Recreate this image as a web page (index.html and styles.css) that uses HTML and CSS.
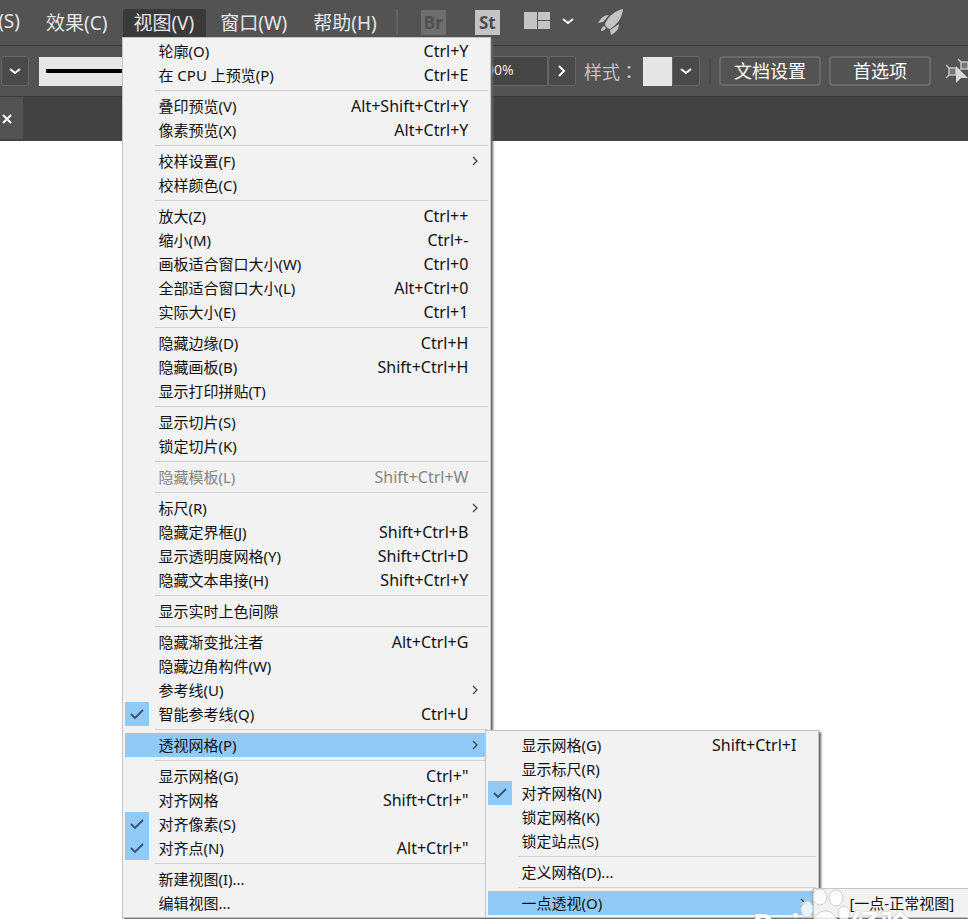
FILE: index.html
```html
<!DOCTYPE html>
<html lang="zh-CN">
<head>
    <meta charset="UTF-8">
    <meta name="viewport" content="width=device-width, initial-scale=1.0">
    <title>视图</title>
    <link rel="stylesheet" href="styles.css">
</head>
<body>
    <svg class="symbols" aria-hidden="true">
        <symbol id="check" viewBox="0 0 24 24">
            <path d="M6 12l4 4 8-8" fill="none" stroke="#35536e" stroke-width="1.8"/>
        </symbol>
        <symbol id="arrow" viewBox="0 0 8 12">
            <path d="M2 2l4 4-4 4" fill="none" stroke="#444" stroke-width="1.3"/>
        </symbol>
        <symbol id="down" viewBox="0 0 14 10">
            <path d="M2 3l5 4 5-4" fill="none" stroke="#fff" stroke-width="2"/>
        </symbol>
    </svg>

    <nav class="menubar">
        <button class="menu-title first">(S)</button>
        <button class="menu-title">效果(C)</button>
        <div class="menu-holder">
            <button class="menu-title active">视图(V)</button>
            <ul class="menu main-menu">
                <li><button>轮廓(O)<kbd>Ctrl+Y</kbd></button></li>
                <li><button>在 CPU 上预览(P)<kbd>Ctrl+E</kbd></button></li>
                <li class="line"></li>
                <li><button>叠印预览(V)<kbd>Alt+Shift+Ctrl+Y</kbd></button></li>
                <li><button>像素预览(X)<kbd>Alt+Ctrl+Y</kbd></button></li>
                <li class="line"></li>
                <li><button>校样设置(F)<svg class="arrow"><use href="#arrow"/></svg></button></li>
                <li><button>校样颜色(C)</button></li>
                <li class="line"></li>
                <li><button>放大(Z)<kbd>Ctrl++</kbd></button></li>
                <li><button>缩小(M)<kbd>Ctrl+-</kbd></button></li>
                <li><button>画板适合窗口大小(W)<kbd>Ctrl+0</kbd></button></li>
                <li><button>全部适合窗口大小(L)<kbd>Alt+Ctrl+0</kbd></button></li>
                <li><button>实际大小(E)<kbd>Ctrl+1</kbd></button></li>
                <li class="line"></li>
                <li><button>隐藏边缘(D)<kbd>Ctrl+H</kbd></button></li>
                <li><button>隐藏画板(B)<kbd>Shift+Ctrl+H</kbd></button></li>
                <li><button>显示打印拼贴(T)</button></li>
                <li class="line"></li>
                <li><button>显示切片(S)</button></li>
                <li><button>锁定切片(K)</button></li>
                <li class="line"></li>
                <li><button disabled>隐藏模板(L)<kbd>Shift+Ctrl+W</kbd></button></li>
                <li class="line"></li>
                <li><button>标尺(R)<svg class="arrow"><use href="#arrow"/></svg></button></li>
                <li><button>隐藏定界框(J)<kbd>Shift+Ctrl+B</kbd></button></li>
                <li><button>显示透明度网格(Y)<kbd>Shift+Ctrl+D</kbd></button></li>
                <li><button>隐藏文本串接(H)<kbd>Shift+Ctrl+Y</kbd></button></li>
                <li class="line"></li>
                <li><button>显示实时上色间隙</button></li>
                <li class="line"></li>
                <li><button>隐藏渐变批注者<kbd>Alt+Ctrl+G</kbd></button></li>
                <li><button>隐藏边角构件(W)</button></li>
                <li><button>参考线(U)<svg class="arrow"><use href="#arrow"/></svg></button></li>
                <li><button><svg class="check"><use href="#check"/></svg>智能参考线(Q)<kbd>Ctrl+U</kbd></button></li>
                <li class="line"></li>
                <li class="selected">
                    <button>透视网格(P)<svg class="arrow"><use href="#arrow"/></svg></button>
                    <ul class="menu sub-menu">
                        <li><button>显示网格(G)<kbd>Shift+Ctrl+I</kbd></button></li>
                        <li><button>显示标尺(R)</button></li>
                        <li><button><svg class="check"><use href="#check"/></svg>对齐网格(N)</button></li>
                        <li><button>锁定网格(K)</button></li>
                        <li><button>锁定站点(S)</button></li>
                        <li class="line"></li>
                        <li><button>定义网格(D)...</button></li>
                        <li class="line"></li>
                        <li class="selected">
                            <button>一点透视(O)<svg class="arrow"><use href="#arrow"/></svg></button>
                            <ul class="menu point-menu">
                                <li><button>[一点-正常视图]</button></li>
                            </ul>
                        </li>
                    </ul>
                </li>
                <li class="line"></li>
                <li><button>显示网格(G)<kbd>Ctrl+"</kbd></button></li>
                <li><button>对齐网格<kbd>Shift+Ctrl+"</kbd></button></li>
                <li><button><svg class="check"><use href="#check"/></svg>对齐像素(S)</button></li>
                <li><button><svg class="check"><use href="#check"/></svg>对齐点(N)<kbd>Alt+Ctrl+"</kbd></button></li>
                <li class="line"></li>
                <li><button>新建视图(I)...</button></li>
                <li><button>编辑视图...</button></li>
            </ul>
        </div>
        <button class="menu-title">窗口(W)</button>
        <button class="menu-title">帮助(H)</button>
        <span class="divider"></span>
        <button class="app bridge">Br</button>
        <button class="app stock">St</button>
        <button class="icon-btn layout" aria-label="排列文档">
            <svg width="52" height="20" viewBox="0 0 52 20">
                <path d="M0 1h13v17H0zM14 1h12v8H14zM14 10h12v8H14z" fill="#c4c4c4"/>
                <path d="M39 8l5 4 5-4" fill="none" stroke="#fff" stroke-width="2"/>
            </svg>
        </button>
        <button class="icon-btn" aria-label="GPU 性能">
            <svg width="26" height="27" viewBox="0 0 26 27">
                <path d="M25 0C17 2 11 6 7 15c0 2 3 5 5 5C20 15 24 9 25 0zM11 6C6 6 3 9 0 14l5-1zM21 15c0 4-2 8-8 11l-1-5zM6 17c-2 1-3 3-3 5 2 0 4-1 5-3z" fill="#c4c4c4"/>
            </svg>
        </button>
    </nav>

    <div class="controls">
        <button class="drop variable" aria-label="宽度配置"><svg class="down"><use href="#down"/></svg></button>
        <button class="brush" aria-label="画笔定义"><span></span></button>
        <input class="opacity" type="text" value="100%" aria-label="不透明度">
        <button class="drop more" aria-label="更多">
            <svg width="10" height="14" viewBox="0 0 10 14"><path d="M2 2l5 5-5 5" fill="none" stroke="#fff" stroke-width="2"/></svg>
        </button>
        <span class="style-label" lang="zh-TW">样式：</span>
        <button class="swatch" aria-label="图形样式"></button>
        <button class="drop style-drop" aria-label="样式列表"><svg class="down"><use href="#down"/></svg></button>
        <span class="divider dark"></span>
        <button class="setting">文档设置</button>
        <button class="setting">首选项</button>
        <button class="icon-btn pick" aria-label="选择类似对象">
            <svg width="22" height="28" viewBox="0 0 22 28">
                <path d="M3 11h7v7H3zM15 5h7v7h-7z" fill="#777" stroke="#c4c4c4" stroke-width="1.5"/>
                <path d="M0 8l3 3M0 21l3-3M12 2l3 3M12 14l3-2" stroke="#c4c4c4" stroke-width="1.5"/>
                <path d="M10 9v17l5-5h7z" fill="#d8d8d8"/>
            </svg>
        </button>
    </div>

    <div class="tabs">
        <div class="tab">
            <button aria-label="关闭">
                <svg width="10" height="10" viewBox="0 0 10 10"><path d="M1 1l8 8M9 1l-8 8" stroke="#fff" stroke-width="2"/></svg>
            </button>
        </div>
    </div>

    <div class="watermark">
        <span>Bai</span>
        <svg width="50" height="32" viewBox="0 0 50 32">
            <g fill="#fff" fill-opacity="0.8" stroke="#d0d0d0">
                <ellipse cx="20" cy="10" rx="7" ry="8"/>
                <ellipse cx="36" cy="11" rx="7" ry="8"/>
                <ellipse cx="7" cy="22" rx="6" ry="8"/>
                <ellipse cx="44" cy="26" rx="6" ry="7"/>
                <path d="M12 36c2-5 5-11 12-12 8-1 12 6 14 12z"/>
            </g>
        </svg>
        <span>经验</span>
    </div>
</body>
</html>
```
FILE: styles.css
```css
* {
    box-sizing: border-box;
}

body {
    margin: 0;
    height: 100vh;
    overflow: hidden;
    position: relative;
    background-color: #fff;
    font-family: "Noto Sans", "Noto Sans CJK SC", sans-serif;
    font-size: 15px;
}

button {
    padding: 0;
    border: none;
    background: none;
    color: inherit;
    font: inherit;
}

.symbols {
    display: none;
}

.menubar {
    display: flex;
    align-items: flex-start;
    gap: 4px;
    height: 46px;
    padding-top: 9px;
    background-color: #535353;
    border-bottom: 1px solid #3c3c3c;
}

.menu-title {
    display: block;
    height: 28px;
    padding: 0 12px 0 10px;
    color: #e6e6e6;
    font-size: 19px;
    line-height: 24px;
    white-space: nowrap;
}

.menu-title.first {
    display: flex;
    justify-content: flex-end;
    width: 32px;
    padding-left: 0;
}

.menu-title.active {
    background-color: #3a3a3a;
    border-radius: 3px 3px 0 0;
}

.menu-holder {
    position: relative;
}

/* drop-down menus */
.menu {
    position: absolute;
    z-index: 2;
    margin: 0;
    padding: 1px 2px 2px;
    list-style: none;
    background-color: #f2f2f2;
    border: 1px solid #c4c4c4;
    box-shadow: 2px 2px 2px #666;
    color: #111;
}

.main-menu {
    top: 100%;
    left: -1px;
    width: 369px;
}

.sub-menu {
    top: -3px;
    left: 360px;
    width: 334px;
    padding-top: 2px;
}

.point-menu {
    top: -3px;
    left: 325px;
    width: 155px;
    padding: 2px 0 2px 2px;
    border-right: none;
    box-shadow: 0 2px 2px #666;
}

.menu li {
    position: relative;
}

.menu li button {
    display: flex;
    align-items: center;
    width: 100%;
    height: 24px;
    padding: 0 20px 0 33px;
    line-height: 24px;
    text-align: left;
    white-space: nowrap;
}

.menu .point-menu button {
    padding-right: 0;
}

.menu li button:disabled {
    color: #858585;
}

.menu .selected > button {
    background-color: #91c9f7;
}

.menu .line {
    height: 7px;
    padding: 3px 0 3px 30px;
}

.menu .line::before {
    content: "";
    display: block;
    height: 1px;
    background-color: #d0d0d0;
}

.menu kbd {
    margin-left: auto;
    font: inherit;
    font-size: 16px;
}

.check {
    width: 24px;
    height: 24px;
    margin: 0 9px 0 -33px;
    background-color: #91c9f7;
}

.arrow {
    width: 8px;
    height: 12px;
    margin: 0 -11px 0 auto;
}

.divider {
    width: 2px;
    height: 26px;
    background-color: #616161;
}

.menubar .divider {
    margin: 0 19px 0 3px;
}

.app {
    width: 25px;
    height: 25px;
    margin: 1px 25px 0 0;
    font-size: 17px;
    font-weight: bold;
    line-height: 25px;
}

.bridge {
    background-color: #6e6e6e;
    color: #505050;
}

.stock {
    margin-right: 20px;
    background-color: #c4c4c4;
    color: #4c4c4c;
}

.icon-btn svg {
    display: block;
}

.layout {
    margin: 2px 18px 0 0;
}

/* control bar */
.controls {
    display: flex;
    align-items: center;
    height: 51px;
    background-color: #535353;
    border-bottom: 1px solid #3c3c3c;
}

.drop {
    display: flex;
    align-items: center;
    justify-content: center;
    width: 28px;
    height: 30px;
    background-color: #4a4a4a;
    border: 1px solid #666;
    border-radius: 3px;
}

.down {
    width: 14px;
    height: 10px;
}

.variable {
    margin: 0 10px 0 1px;
}

.brush {
    flex: 1;
    height: 29px;
    padding: 0 0 0 7px;
    background-color: #e6e6e6;
}

.brush span {
    display: block;
    height: 4px;
    background-color: #000;
}

.opacity {
    width: 77px;
    height: 30px;
    margin-left: 20px;
    padding: 0 0 4px 6px;
    background-color: #454545;
    border: 1px solid #666;
    color: #e6e6e6;
    font: inherit;
    font-size: 14px;
}

.style-label {
    margin-left: 8px;
    color: #c4c4c4;
    font-family: "Noto Sans CJK TC", sans-serif;
    font-size: 18px;
    white-space: nowrap;
}

.swatch {
    width: 29px;
    height: 29px;
    margin-left: 5px;
    background-color: #e6e6e6;
}

.dark {
    margin: 0 8px 0 9px;
    background-color: #4b4b4b;
}

.setting {
    width: 102px;
    height: 30px;
    margin-right: 8px;
    border: 2px solid #6a6a6a;
    border-radius: 4px;
    color: #fff;
    font-size: 18px;
    line-height: 26px;
    white-space: nowrap;
}

.pick {
    margin-left: 7px;
}

/* document tabs */
.tabs {
    height: 44px;
    background-color: #424242;
}

.tab {
    display: flex;
    align-items: center;
    width: 23px;
    height: 42px;
    padding-left: 2px;
    background-color: #535353;
}

.watermark {
    position: absolute;
    z-index: 3;
    right: 58px;
    bottom: 0;
    display: flex;
    height: 32px;
    overflow: hidden;
    color: #fff;
    font-size: 30px;
    font-weight: bold;
    line-height: 76px;
    text-shadow: 0 0 2px #aaa;
}
```
